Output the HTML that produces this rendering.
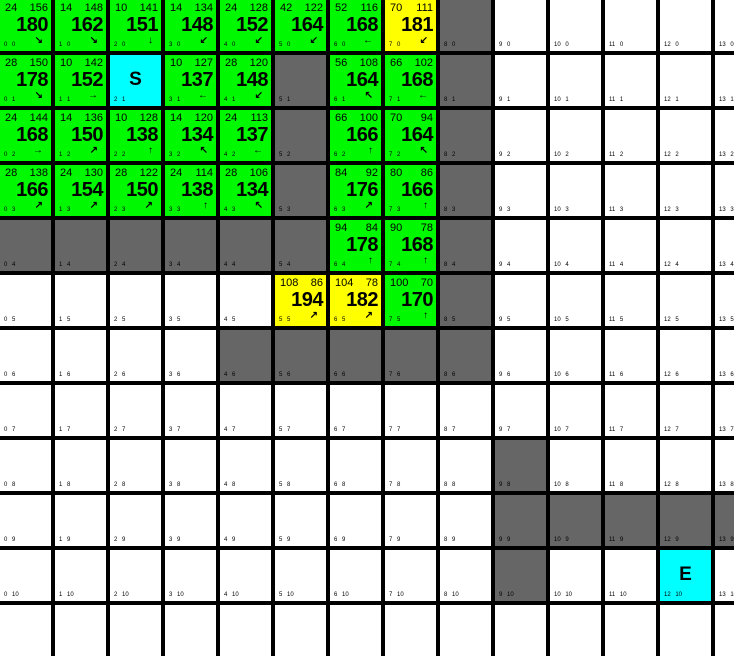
<!DOCTYPE html><html><head><meta charset="utf-8"><style>
body{margin:0;background:#000;width:734px;height:641px;overflow:hidden;font-family:"Liberation Sans",sans-serif}
.g{display:grid;grid-template-columns:repeat(14,51px);grid-auto-rows:51px;gap:4px;width:770px}
.c{position:relative;background:#fff;color:#000}
.G{background:#00f800}.Y{background:#ffff00}.C{background:#00ffff}.D{background:#666}
i,b{position:absolute;top:3px;font-style:normal;font-weight:normal;font-size:11px;line-height:11px}
i{left:5px}b{right:3px}
u{position:absolute;right:3px;top:15px;font-size:20px;line-height:20px;font-weight:bold;text-decoration:none;letter-spacing:-0.5px}
s{position:absolute;left:4px;bottom:3px;font-size:6px;line-height:6px;text-decoration:none;word-spacing:3px}
em{position:absolute;right:8px;bottom:5px;font-size:10px;line-height:10px;font-style:normal;font-weight:bold}
.L{position:absolute;left:0;right:0;top:14px;text-align:center;font-size:19px;font-weight:bold}
</style></head><body><div class="g">
<div class="c G"><i>24</i><b>156</b><u>180</u><s>0 0</s><em>↘</em></div>
<div class="c G"><i>14</i><b>148</b><u>162</u><s>1 0</s><em>↘</em></div>
<div class="c G"><i>10</i><b>141</b><u>151</u><s>2 0</s><em>↓</em></div>
<div class="c G"><i>14</i><b>134</b><u>148</u><s>3 0</s><em>↙</em></div>
<div class="c G"><i>24</i><b>128</b><u>152</u><s>4 0</s><em>↙</em></div>
<div class="c G"><i>42</i><b>122</b><u>164</u><s>5 0</s><em>↙</em></div>
<div class="c G"><i>52</i><b>116</b><u>168</u><s>6 0</s><em>←</em></div>
<div class="c Y"><i>70</i><b>111</b><u>181</u><s>7 0</s><em>↙</em></div>
<div class="c D"><s>8 0</s></div>
<div class="c"><s>9 0</s></div><div class="c"><s>10 0</s></div><div class="c"><s>11 0</s></div><div class="c"><s>12 0</s></div><div class="c"><s>13 0</s></div>

<div class="c G"><i>28</i><b>150</b><u>178</u><s>0 1</s><em>↘</em></div>
<div class="c G"><i>10</i><b>142</b><u>152</u><s>1 1</s><em>→</em></div>
<div class="c C"><div class="L">S</div><s>2 1</s></div>
<div class="c G"><i>10</i><b>127</b><u>137</u><s>3 1</s><em>←</em></div>
<div class="c G"><i>28</i><b>120</b><u>148</u><s>4 1</s><em>↙</em></div>
<div class="c D"><s>5 1</s></div>
<div class="c G"><i>56</i><b>108</b><u>164</u><s>6 1</s><em>↖</em></div>
<div class="c G"><i>66</i><b>102</b><u>168</u><s>7 1</s><em>←</em></div>
<div class="c D"><s>8 1</s></div>
<div class="c"><s>9 1</s></div><div class="c"><s>10 1</s></div><div class="c"><s>11 1</s></div><div class="c"><s>12 1</s></div><div class="c"><s>13 1</s></div>

<div class="c G"><i>24</i><b>144</b><u>168</u><s>0 2</s><em>→</em></div>
<div class="c G"><i>14</i><b>136</b><u>150</u><s>1 2</s><em>↗</em></div>
<div class="c G"><i>10</i><b>128</b><u>138</u><s>2 2</s><em>↑</em></div>
<div class="c G"><i>14</i><b>120</b><u>134</u><s>3 2</s><em>↖</em></div>
<div class="c G"><i>24</i><b>113</b><u>137</u><s>4 2</s><em>←</em></div>
<div class="c D"><s>5 2</s></div>
<div class="c G"><i>66</i><b>100</b><u>166</u><s>6 2</s><em>↑</em></div>
<div class="c G"><i>70</i><b>94</b><u>164</u><s>7 2</s><em>↖</em></div>
<div class="c D"><s>8 2</s></div>
<div class="c"><s>9 2</s></div><div class="c"><s>10 2</s></div><div class="c"><s>11 2</s></div><div class="c"><s>12 2</s></div><div class="c"><s>13 2</s></div>

<div class="c G"><i>28</i><b>138</b><u>166</u><s>0 3</s><em>↗</em></div>
<div class="c G"><i>24</i><b>130</b><u>154</u><s>1 3</s><em>↗</em></div>
<div class="c G"><i>28</i><b>122</b><u>150</u><s>2 3</s><em>↗</em></div>
<div class="c G"><i>24</i><b>114</b><u>138</u><s>3 3</s><em>↑</em></div>
<div class="c G"><i>28</i><b>106</b><u>134</u><s>4 3</s><em>↖</em></div>
<div class="c D"><s>5 3</s></div>
<div class="c G"><i>84</i><b>92</b><u>176</u><s>6 3</s><em>↗</em></div>
<div class="c G"><i>80</i><b>86</b><u>166</u><s>7 3</s><em>↑</em></div>
<div class="c D"><s>8 3</s></div>
<div class="c"><s>9 3</s></div><div class="c"><s>10 3</s></div><div class="c"><s>11 3</s></div><div class="c"><s>12 3</s></div><div class="c"><s>13 3</s></div>

<div class="c D"><s>0 4</s></div><div class="c D"><s>1 4</s></div><div class="c D"><s>2 4</s></div><div class="c D"><s>3 4</s></div><div class="c D"><s>4 4</s></div><div class="c D"><s>5 4</s></div>
<div class="c G"><i>94</i><b>84</b><u>178</u><s>6 4</s><em>↑</em></div>
<div class="c G"><i>90</i><b>78</b><u>168</u><s>7 4</s><em>↑</em></div>
<div class="c D"><s>8 4</s></div>
<div class="c"><s>9 4</s></div><div class="c"><s>10 4</s></div><div class="c"><s>11 4</s></div><div class="c"><s>12 4</s></div><div class="c"><s>13 4</s></div>

<div class="c"><s>0 5</s></div><div class="c"><s>1 5</s></div><div class="c"><s>2 5</s></div><div class="c"><s>3 5</s></div><div class="c"><s>4 5</s></div>
<div class="c Y"><i>108</i><b>86</b><u>194</u><s>5 5</s><em>↗</em></div>
<div class="c Y"><i>104</i><b>78</b><u>182</u><s>6 5</s><em>↗</em></div>
<div class="c G"><i>100</i><b>70</b><u>170</u><s>7 5</s><em>↑</em></div>
<div class="c D"><s>8 5</s></div>
<div class="c"><s>9 5</s></div><div class="c"><s>10 5</s></div><div class="c"><s>11 5</s></div><div class="c"><s>12 5</s></div><div class="c"><s>13 5</s></div>

<div class="c"><s>0 6</s></div><div class="c"><s>1 6</s></div><div class="c"><s>2 6</s></div><div class="c"><s>3 6</s></div>
<div class="c D"><s>4 6</s></div><div class="c D"><s>5 6</s></div><div class="c D"><s>6 6</s></div><div class="c D"><s>7 6</s></div><div class="c D"><s>8 6</s></div>
<div class="c"><s>9 6</s></div><div class="c"><s>10 6</s></div><div class="c"><s>11 6</s></div><div class="c"><s>12 6</s></div><div class="c"><s>13 6</s></div>

<div class="c"><s>0 7</s></div><div class="c"><s>1 7</s></div><div class="c"><s>2 7</s></div><div class="c"><s>3 7</s></div><div class="c"><s>4 7</s></div><div class="c"><s>5 7</s></div><div class="c"><s>6 7</s></div><div class="c"><s>7 7</s></div><div class="c"><s>8 7</s></div><div class="c"><s>9 7</s></div><div class="c"><s>10 7</s></div><div class="c"><s>11 7</s></div><div class="c"><s>12 7</s></div><div class="c"><s>13 7</s></div>

<div class="c"><s>0 8</s></div><div class="c"><s>1 8</s></div><div class="c"><s>2 8</s></div><div class="c"><s>3 8</s></div><div class="c"><s>4 8</s></div><div class="c"><s>5 8</s></div><div class="c"><s>6 8</s></div><div class="c"><s>7 8</s></div><div class="c"><s>8 8</s></div><div class="c D"><s>9 8</s></div><div class="c"><s>10 8</s></div><div class="c"><s>11 8</s></div><div class="c"><s>12 8</s></div><div class="c"><s>13 8</s></div>

<div class="c"><s>0 9</s></div><div class="c"><s>1 9</s></div><div class="c"><s>2 9</s></div><div class="c"><s>3 9</s></div><div class="c"><s>4 9</s></div><div class="c"><s>5 9</s></div><div class="c"><s>6 9</s></div><div class="c"><s>7 9</s></div><div class="c"><s>8 9</s></div><div class="c D"><s>9 9</s></div><div class="c D"><s>10 9</s></div><div class="c D"><s>11 9</s></div><div class="c D"><s>12 9</s></div><div class="c D"><s>13 9</s></div>

<div class="c"><s>0 10</s></div><div class="c"><s>1 10</s></div><div class="c"><s>2 10</s></div><div class="c"><s>3 10</s></div><div class="c"><s>4 10</s></div><div class="c"><s>5 10</s></div><div class="c"><s>6 10</s></div><div class="c"><s>7 10</s></div><div class="c"><s>8 10</s></div><div class="c D"><s>9 10</s></div><div class="c"><s>10 10</s></div><div class="c"><s>11 10</s></div><div class="c C"><div class="L">E</div><s>12 10</s></div><div class="c"><s>13 10</s></div>

<div class="c"></div><div class="c"></div><div class="c"></div><div class="c"></div><div class="c"></div><div class="c"></div><div class="c"></div><div class="c"></div><div class="c"></div><div class="c"></div><div class="c"></div><div class="c"></div><div class="c"></div><div class="c"></div>
</div></body></html>
